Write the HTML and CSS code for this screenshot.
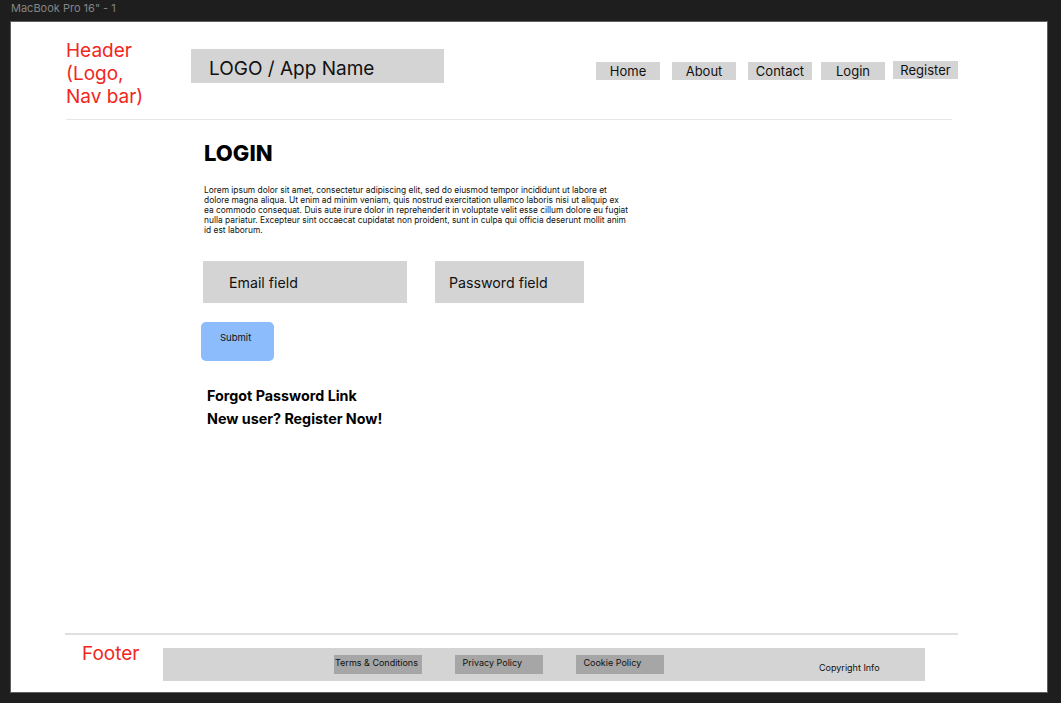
FILE: index.html
```html
<!DOCTYPE html>
<html lang="en">
<head>
<meta charset="utf-8">
<title>Login wireframe</title>
<link rel="stylesheet" href="styles.css">
</head>
<body>
<div class="canvas-title">MacBook Pro 16" - 1</div>
<div class="frame">
  <header class="header">
    <div class="header-label">Header<br>(Logo,<br>Nav bar)</div>
    <div class="logo">LOGO / App Name</div>
    <nav class="nav">
      <a class="nav-item nav-home">Home</a>
      <a class="nav-item nav-about">About</a>
      <a class="nav-item nav-contact">Contact</a>
      <a class="nav-item nav-login">Login</a>
      <a class="nav-item nav-register">Register</a>
    </nav>
  </header>
  <div class="rule"></div>
  <main class="main">
    <h1 class="title">LOGIN</h1>
    <p class="lorem">Lorem ipsum dolor sit amet, consectetur adipiscing elit, sed do eiusmod tempor incididunt ut labore et<br>dolore magna aliqua. Ut enim ad minim veniam, quis nostrud exercitation ullamco laboris nisi ut aliquip ex<br>ea commodo consequat. Duis aute irure dolor in reprehenderit in voluptate velit esse cillum dolore eu fugiat<br>nulla pariatur. Excepteur sint occaecat cupidatat non proident, sunt in culpa qui officia deserunt mollit anim<br>id est laborum.</p>
    <div class="fields">
      <div class="field field-email">Email field</div>
      <div class="field field-password">Password field</div>
    </div>
    <div class="submit">Submit</div>
    <div class="links">
      <div class="link">Forgot Password Link</div>
      <div class="link">New user? Register Now!</div>
    </div>
  </main>
  <footer class="footer">
    <div class="footer-rule"></div>
    <div class="footer-row">
      <div class="footer-label">Footer</div>
      <div class="footer-bar">
        <div class="footer-link footer-terms">Terms &amp; Conditions</div>
        <div class="footer-link">Privacy Policy</div>
        <div class="footer-link">Cookie Policy</div>
        <div class="copyright">Copyright Info</div>
      </div>
    </div>
  </footer>
</div>
</body>
</html>
```
FILE: styles.css
```css
* { box-sizing: border-box; }
html, body { margin: 0; padding: 0; }
body {
  background: #1e1e1e;
  font-family: Inter, "Noto Sans", "Liberation Sans", sans-serif;
  color: #111;
  width: 1061px;
  height: 703px;
  overflow: hidden;
}
.canvas-title {
  height: 21px;
  padding: 2px 0 0 11px;
  font-size: 11px;
  line-height: 13px;
  color: #858585;
}
.frame {
  margin-left: 10px;
  width: 1038px;
  height: 672px;
  border: 1px solid #5f5f5f;
  background: #fff;
  display: flex;
  flex-direction: column;
}
.header {
  display: flex;
  align-items: flex-start;
  padding: 17px 0 0 55px;
}
.header-label, .footer-label {
  font-size: 19px;
  line-height: 23px;
  color: #f2261c;
}
.header-label { width: 125px; }
.logo {
  margin-top: 10px;
  width: 253px;
  height: 34px;
  background: #d4d4d4;
  padding: 5px 0 0 18px;
  display: flex;
  align-items: center;
  font-size: 19px;
  color: #111;
}
.nav {
  display: flex;
  align-items: flex-start;
  margin: 23px 0 0 152px;
}
.nav-item {
  width: 64px;
  height: 18px;
  background: #d4d4d4;
  font-size: 13px;
  line-height: 18px;
  text-align: center;
  color: #111;
}
.nav-about, .nav-contact { margin-left: 12px; }
.nav-login { margin-left: 9px; }
.nav-register { margin-left: 8px; margin-top: -1px; width: 65px; }
.rule {
  margin: 11px 0 0 55px;
  width: 886px;
  border-top: 1px solid #e6e6e6;
}
.main {
  flex: 1;
  padding-left: 190px;
}
.title {
  margin: 19px 0 0 3px;
  font-size: 22px;
  line-height: 28px;
  font-weight: 800;
  color: #000;
}
.lorem {
  margin: 18px 0 0 3px;
  font-size: 8.4px;
  line-height: 10px;
  white-space: nowrap;
  color: #111;
}
.fields {
  display: flex;
  margin: 26px 0 0 2px;
}
.field {
  height: 42px;
  background: #d4d4d4;
  display: flex;
  align-items: center;
  font-size: 14.2px;
  color: #111;
}
.field-email { width: 204px; padding-left: 26px; }
.field-password { width: 149px; padding-left: 14px; margin-left: 28px; }
.submit {
  margin-top: 19px;
  width: 73px;
  height: 39px;
  background: #8cbcfc;
  border-radius: 5px;
  padding: 10px 0 0 19px;
  font-size: 9.5px;
  line-height: 12px;
  color: #111;
}
.links {
  margin: 23px 0 0 6px;
}
.link {
  font-size: 14.3px;
  line-height: 23px;
  font-weight: 700;
  color: #000;
}
.footer-rule {
  margin-left: 54px;
  width: 893px;
  border-top: 2px solid #e0e0e0;
}
.footer-row {
  display: flex;
  align-items: flex-start;
  padding: 0 0 11px 71px;
}
.footer-label {
  width: 81px;
  margin-top: 7px;
}
.footer-bar {
  margin-top: 13px;
  width: 762px;
  height: 33px;
  background: #d4d4d4;
  display: flex;
  align-items: flex-start;
  padding-left: 171px;
}
.footer-link {
  margin-top: 7px;
  width: 88px;
  height: 19px;
  background: #a6a6a6;
  padding: 1.5px 0 0 7.5px;
  font-size: 9px;
  line-height: 12px;
  white-space: nowrap;
  color: #111;
}
.footer-link + .footer-link { margin-left: 33px; }
.footer-terms { padding-left: 1px; }
.copyright {
  margin: 14px 0 0 155px;
  font-size: 9px;
  line-height: 12px;
  color: #111;
}
```
